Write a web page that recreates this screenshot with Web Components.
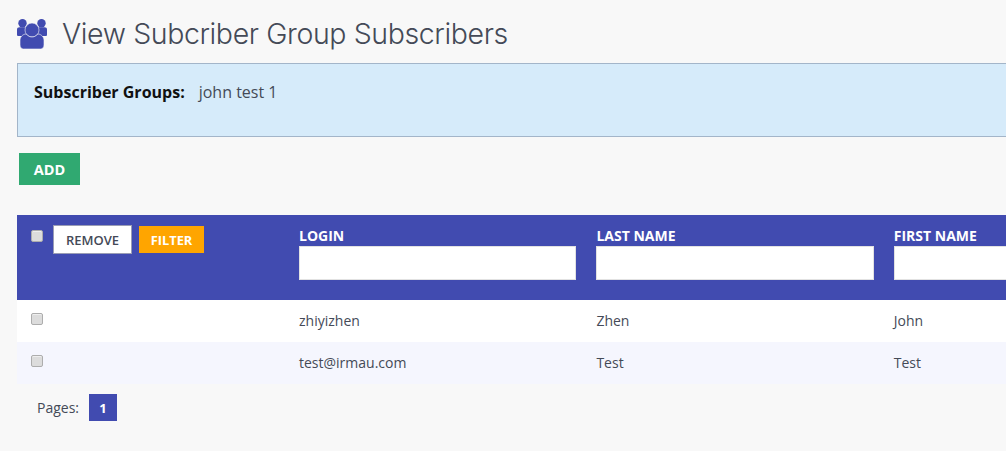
<!DOCTYPE html>
<html lang="en"><head><meta charset="utf-8"><title>View Subcriber Group Subscribers</title>
<style>
html,body{margin:0;padding:0;height:451px;overflow:hidden;background:#f8f8f8;}
body{font-family:"Open Sans","Noto Sans",sans-serif;font-size:14px;color:#333;}
</style></head><body>
<subscriber-page></subscriber-page>
<script>
function def(name, css, html){
  customElements.define(name, class extends HTMLElement{
    constructor(){super();const r=this.attachShadow({mode:'open'});r.innerHTML='<style>'+css+'</style>'+html;}
  });
}
def('page-title',`
:host{display:flex;align-items:center;gap:15px;height:63px;box-sizing:border-box;padding:6px 0 0 17px;}
svg{display:block;width:30px;height:30px;flex:none;margin-top:-1px}
h1{margin:0;font:300 28.5px/1 Inter,"Open Sans",sans-serif;color:#444a57;white-space:nowrap;letter-spacing:-.39px}
`,`<svg viewBox="0 0 30 30"><g fill="#414bb0" stroke="#f8f8f8" stroke-width="0">
<circle cx="5.500" cy="4.300" r="4.200"/><circle cx="24.500" cy="4.300" r="4.200"/>
<path d="M0 10.500C0 9 1 8.200 2.500 8.200H27.500C29 8.200 30 9 30 10.500V15.500C30 16.500 29.500 17 28.500 17H1.500C.5 17 0 16.500 0 15.500Z"/>
<circle cx="15" cy="11" r="7" stroke-width=".6"/>
<path stroke-width=".6" d="M3 21C3 18 6 15 9 15C11 17 13 18 15 18C17 18 19 17 21 15C24 15 27 18 27 21V26C27 28.500 25.500 30 23.500 30H6.500C4.500 30 3 28.500 3 26Z"/></g></svg><h1><slot></slot></h1>`);
def('info-panel',`
:host{display:block;box-sizing:border-box;margin-left:17px;width:1100px;height:74px;background:#d6ebfa;border:1px solid #a3b5c9;padding:17px 16px;font-size:16px;line-height:22px;color:#444a57;}
b{font-weight:700;color:#111;margin-right:14px}
`,`<b><slot name="label"></slot></b><slot></slot>`);
def('action-button',`
:host{display:inline-flex;align-items:center;justify-content:center;box-sizing:border-box;font-weight:700;font-size:13px;color:#fff;white-space:nowrap}
:host([kind=add]){width:61px;height:32px;background:#30a971;font-size:14.500px}
:host([kind=remove]){width:79px;height:29px;background:#fff;border:1px solid #9a9db5;color:#444a57;font-weight:600;font-size:13px}
:host([kind=filter]){width:65px;height:27px;background:#ffa500;font-size:12.800px}
`,`<slot></slot>`);
def('row-check',`
:host{display:block;width:12px;height:12px}
input{appearance:none;-webkit-appearance:none;display:block;margin:0;box-sizing:border-box;width:12px;height:12px;background:#dcdcdc;border:1px solid #adadad;border-radius:2px;box-shadow:inset 0 1px 0 #eee}
`,`<input type="checkbox" aria-label="Select">`);
const cols='grid-template-columns:272px 297.400px 297.400px 297.400px;';
def('data-head',`
:host{display:grid;${cols}height:85px;background:#414bb0;color:#fff;}
.tools{display:flex;align-items:flex-start;padding:10px 0 0 14px}
row-check{margin:5px 10px 0 0}
action-button{margin-right:7px}
action-button[kind=filter]{margin-top:1px}
.col{padding:10px 10px 0 10px;font-weight:700;font-size:14px;line-height:21px;white-space:nowrap;}
.box{box-sizing:border-box;height:34px;background:#fff;border:1px solid #e2e2e2;width:100%}
`,`<div class="tools"><row-check></row-check><action-button kind="remove">REMOVE</action-button><action-button kind="filter">FILTER</action-button></div>
<div class="col">LOGIN<div class="box"></div></div><div class="col">LAST NAME<div class="box"></div></div><div class="col">FIRST NAME<div class="box"></div></div>`);
def('data-row',`
:host{display:grid;${cols}height:42px;background:#fff;color:#444a57;font-size:14px;line-height:42px}
:host([alt]){background:#f5f6fe}
.t{padding-left:10px;white-space:nowrap}
div.k{padding:13px 0 0 14px}
`,`<div class="k"><row-check></row-check></div><div class="t"><slot name="a"></slot></div><div class="t"><slot name="b"></slot></div><div class="t"><slot name="c"></slot></div>`);
def('data-pager',`
:host{display:flex;align-items:center;gap:10px;padding:10px 0 0 20px;font-size:14px;color:#444a57}
b{display:flex;align-items:center;justify-content:center;width:28px;height:27px;background:#414bb0;color:#fff;font-size:13px;font-weight:700}
`,`<span>Pages:</span><b>1</b>`);
def('subscriber-page',`
:host{display:block;}
.add{display:block;margin:16px 0 30px 19px;height:32px}
.table{margin-left:17px;width:1100px}
`,`<page-title>View Subcriber Group Subscribers</page-title>
<info-panel><span slot="label">Subscriber Groups:</span>john test 1</info-panel>
<div class="add"><action-button kind="add">ADD</action-button></div>
<div class="table"><data-head></data-head>
<data-row><span slot="a">zhiyizhen</span><span slot="b">Zhen</span><span slot="c">John</span></data-row>
<data-row alt><span slot="a">test@irmau.com</span><span slot="b">Test</span><span slot="c">Test</span></data-row>
<data-pager></data-pager></div>`);
</script></body></html>
